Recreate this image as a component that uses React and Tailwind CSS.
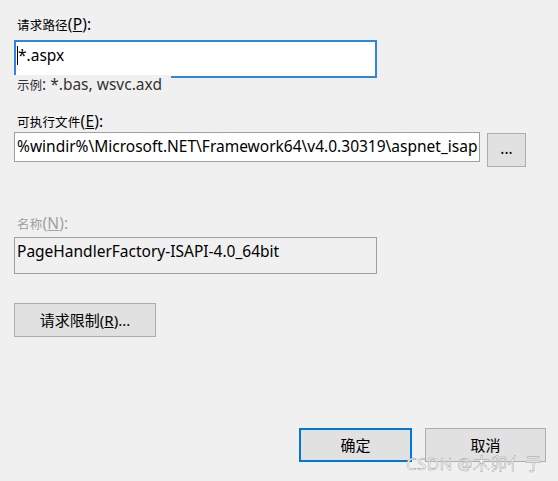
function Cj({ children }) {
  return <span className="text-[12.5px]">{children}</span>;
}

export default function App() {
  const font = { fontFamily: '"Noto Sans", "Noto Sans CJK SC", sans-serif' };
  return (
    <div className="relative w-[558px] h-[481px] bg-[#f0f0f0] text-[15.5px] text-[#000] overflow-hidden" style={font}>
      <div className="flex flex-col pl-[14px] pt-[14px]">
        <div className="pl-[3px] h-[20px] leading-[20px] tracking-[0.2px]"><Cj>请求路径</Cj>(<span className="underline">P</span>):</div>
        <div className="mt-[6px] w-[363px] h-[38px] bg-white border-2 border-[#2f86e0] flex items-start pt-[3px] pl-[1px]">
          <span className="w-px h-[19px] bg-black mt-[1px]"></span>
          <span className="leading-[20px]">*.aspx</span>
        </div>
        <div className="relative -mt-[3px] self-start w-[157px] bg-[#f0f0f0] pl-[3px] h-[19px] leading-[19px] text-[#333] whitespace-nowrap"><Cj>示例</Cj>: *.bas, wsvc.axd</div>
        <div className="mt-[17px] pl-[3px] h-[20px] leading-[20px] tracking-[0.2px]"><Cj>可执行文件</Cj>(<span className="underline">E</span>):</div>
        <div className="mt-[1px] flex items-start gap-[7px]">
          <div className="w-[466px] h-[30px] bg-white border border-[#a0a0a0] whitespace-nowrap pl-[2px] leading-[27px]">%windir%\Microsoft.NET\Framework64\v4.0.30319\aspnet_isap</div>
          <div className="mt-[1px] w-[39px] h-[34px] bg-[#e1e1e1] border border-[#adadad] flex items-center justify-center leading-none pb-[2px]">...</div>
        </div>
        <div className="mt-[46px] pl-[3px] h-[20px] leading-[20px] text-[#a0a0a0] tracking-[0.2px]"><Cj>名称</Cj>(<span className="underline">N</span>):</div>
        <div className="mt-[4px] w-[363px] h-[37px] border border-[#a0a0a0] pl-[2px] pt-[3px] leading-[20px]">PageHandlerFactory-ISAPI-4.0_64bit</div>
        <div className="mt-[29px] w-[142px] h-[34px] bg-[#e1e1e1] border border-[#adadad] flex items-center justify-center text-[15px]">请求限制(<span className="underline">R</span>)...</div>
        <div className="mt-[91px] self-end mr-[12px] flex gap-[13px] text-[15px]">
          <div className="w-[113px] h-[34px] bg-[#e1e1e1] border-2 border-[#0078d7] flex items-center justify-center">确定</div>
          <div className="w-[121px] h-[34px] bg-[#e1e1e1] border border-[#adadad] flex items-center justify-center">取消</div>
        </div>
      </div>
      <div className="absolute left-[406px] top-[451px] text-[17px] text-white tracking-[0.3px]" style={{ WebkitTextStroke: '0.45px #9a9a9a' }}>CSDN @木卯亻亍</div>
    </div>
  );
}
